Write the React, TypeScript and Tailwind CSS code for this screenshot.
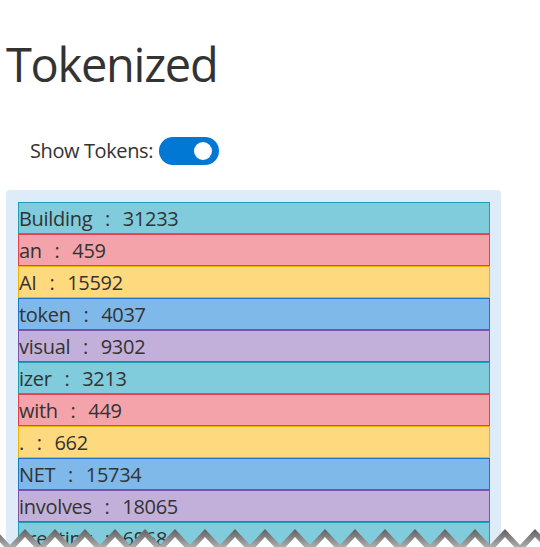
import React from 'react';

type Token = { text: string; id: number };

const tokens: Token[] = [
  { text: 'Building', id: 31233 },
  { text: 'an', id: 459 },
  { text: 'AI', id: 15592 },
  { text: 'token', id: 4037 },
  { text: 'visual', id: 9302 },
  { text: 'izer', id: 3213 },
  { text: 'with', id: 449 },
  { text: '.', id: 662 },
  { text: 'NET', id: 15734 },
  { text: 'involves', id: 18065 },
  { text: 'creating', id: 6968 },
  { text: 'a', id: 264 },
];

const palette = [
  'bg-[#80cbdc] border-[#1f9cb8]',
  'bg-[#f4a3aa] border-[#e2424f]',
  'bg-[#ffd97e] border-[#f0b400]',
  'bg-[#7eb9ea] border-[#1e74c8]',
  'bg-[#c3b0da] border-[#7d55ab]',
];

// zigzag tear along the bottom of the screenshot
const TornEdge: React.FC = () => {
  const pts: string[] = [];
  for (let x = -20; x <= 560; x += 30) {
    pts.push(`${x},24`);
    pts.push(`${x + 15},8`);
  }
  const d = `M-20,24 L${pts.join(' L')} L560,24 L560,44 L-20,44 Z`;
  return (
    <svg className="pointer-events-none absolute bottom-0 left-0" width="540" height="26" viewBox="0 0 540 26">
      <defs>
        <linearGradient id="shade" x1="0" y1="0" x2="0" y2="1">
          <stop offset="0" stopColor="#5e5e5e" />
          <stop offset="0.6" stopColor="#bdbdbd" />
          <stop offset="1" stopColor="#f6f6f6" />
        </linearGradient>
      </defs>
      <path d={d} fill="url(#shade)" />
      <path d={d} fill="#ffffff" transform="translate(0,8)" />
    </svg>
  );
};

const App: React.FC = () => {
  return (
    <div className="relative h-[547px] w-[540px] overflow-hidden bg-white font-['Open_Sans','Noto_Sans',sans-serif] text-[#333333]">
      <h1 className="pl-[6px] pt-[34px] text-[47px] leading-[60px] font-normal tracking-[-1.3px]">Tokenized</h1>

      <div className="mt-[43px] flex items-center gap-[6px] pl-[30px]">
        <span className="text-[20px] leading-[28px] tracking-[-0.4px]">Show Tokens:</span>
        <div className="flex h-[28px] w-[60px] items-center justify-end rounded-full bg-[#0078d4] pr-[7px]">
          <div className="h-[18px] w-[18px] rounded-full bg-white" />
        </div>
      </div>

      <div className="mx-[6px] mt-[25px] w-[495px] rounded-[4px] bg-[#deebf9] pl-[12px] pt-[12px]">
        <div className="flex w-[472px] flex-col">
          {tokens.map((t, i) => (
            <div
              key={i}
              className={`h-[32px] border text-[20px] leading-[32px] whitespace-pre tracking-[-0.3px] [word-spacing:1.5px] ${palette[i % palette.length]}`}
            >
              {`${t.text}  :  ${t.id}`}
            </div>
          ))}
        </div>
      </div>

      <TornEdge />
    </div>
  );
};

export default App;
